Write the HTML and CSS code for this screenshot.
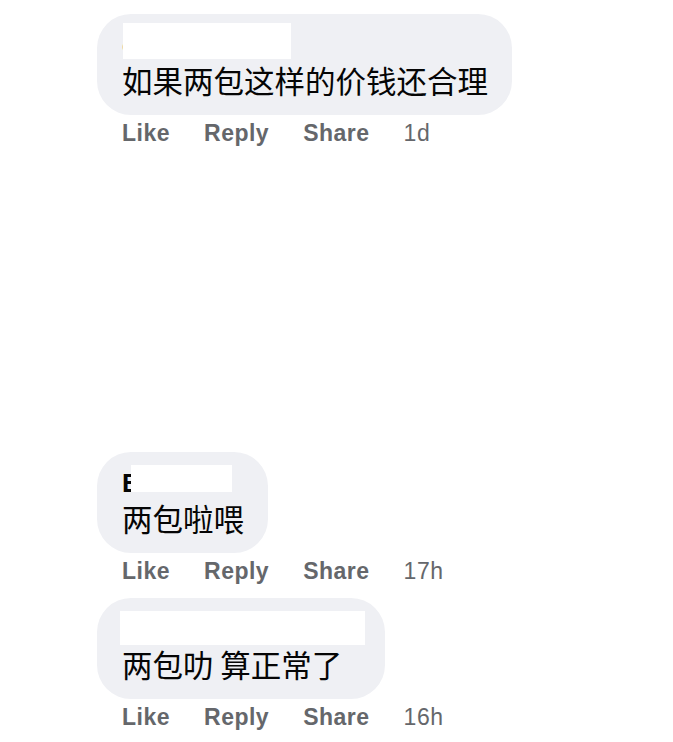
FILE: index.html
```html
<!DOCTYPE html>
<html>
	<head>
		<meta charset="UTF-8">
		<meta name="viewport" content="width=device-width,initial-scale=1">
		<title>Comments</title>
		<link rel="stylesheet" href="styles.css">
	</head>
	<body>
		<div class="thread">
			<div class="actions actions-cut">
				<span class="act">Like</span>
				<span class="act">Reply</span>
				<span class="act">Share</span>
				<span class="time">1d</span>
			</div>

			<div class="comment">
				<div class="bubble">
					<div class="name">c<span class="mask mask-a"></span></div>
					<div class="text">如果两包这样的价钱还合理</div>
				</div>
				<div class="actions">
					<span class="act">Like</span>
					<span class="act">Reply</span>
					<span class="act">Share</span>
					<span class="time">1d</span>
				</div>
			</div>

			<div class="gap"></div>

			<div class="comment">
				<div class="bubble">
					<div class="name">E<span class="mask mask-b"></span></div>
					<div class="text">两包啦喂</div>
				</div>
				<div class="actions">
					<span class="act">Like</span>
					<span class="act">Reply</span>
					<span class="act">Share</span>
					<span class="time">17h</span>
				</div>
			</div>

			<div class="comment">
				<div class="bubble">
					<div class="name name-wide"><span class="mask mask-c"></span></div>
					<div class="text">两包叻 算正常了</div>
				</div>
				<div class="actions">
					<span class="act">Like</span>
					<span class="act">Reply</span>
					<span class="act">Share</span>
					<span class="time">16h</span>
				</div>
			</div>
		</div>
	</body>
</html>
```

FILE: styles.css
```css
body{
	margin: 0;
	padding: 0;
	background: #fff;
	font-family: "Liberation Sans", "Noto Sans CJK SC", sans-serif;
	overflow: hidden;
}
.thread{
	margin-top: -31px;
	padding-left: 97px;
}
.comment{
	margin-top: 5px;
}
.bubble{
	display: inline-block;
	background: #eff0f4;
	border-radius: 34px;
	padding: 16px 24px 13px 25px;
}
.name{
	position: relative;
	height: 28px;
	line-height: 30px;
	font-size: 26px;
	font-weight: 700;
	color: #050505;
}
.name-wide{
	width: 239px;
}
.mask{
	position: absolute;
	background: #fff;
}
.mask-a{
	left: 1px;
	top: -7px;
	width: 168px;
	height: 36px;
}
.mask-b{
	left: 9px;
	top: -3px;
	width: 101px;
	height: 27px;
}
.mask-c{
	left: -2px;
	top: -3px;
	width: 245px;
	height: 34px;
}
.text{
	font-family: "Noto Sans CJK SC", sans-serif;
	font-size: 30.5px;
	line-height: 44px;
	color: #050505;
	white-space: nowrap;
}
.actions{
	display: flex;
	align-items: center;
	gap: 34px;
	height: 36px;
	padding-bottom: 4px;
	padding-left: 25px;
	color: #65676b;
	font-size: 23px;
	letter-spacing: 0.5px;
}
.actions-cut{
	margin-top: -3px;
	margin-bottom: 3px;
}
.act{
	font-weight: 700;
}
.time{
	font-weight: 400;
}
.gap{
	height: 292px;
}
```
